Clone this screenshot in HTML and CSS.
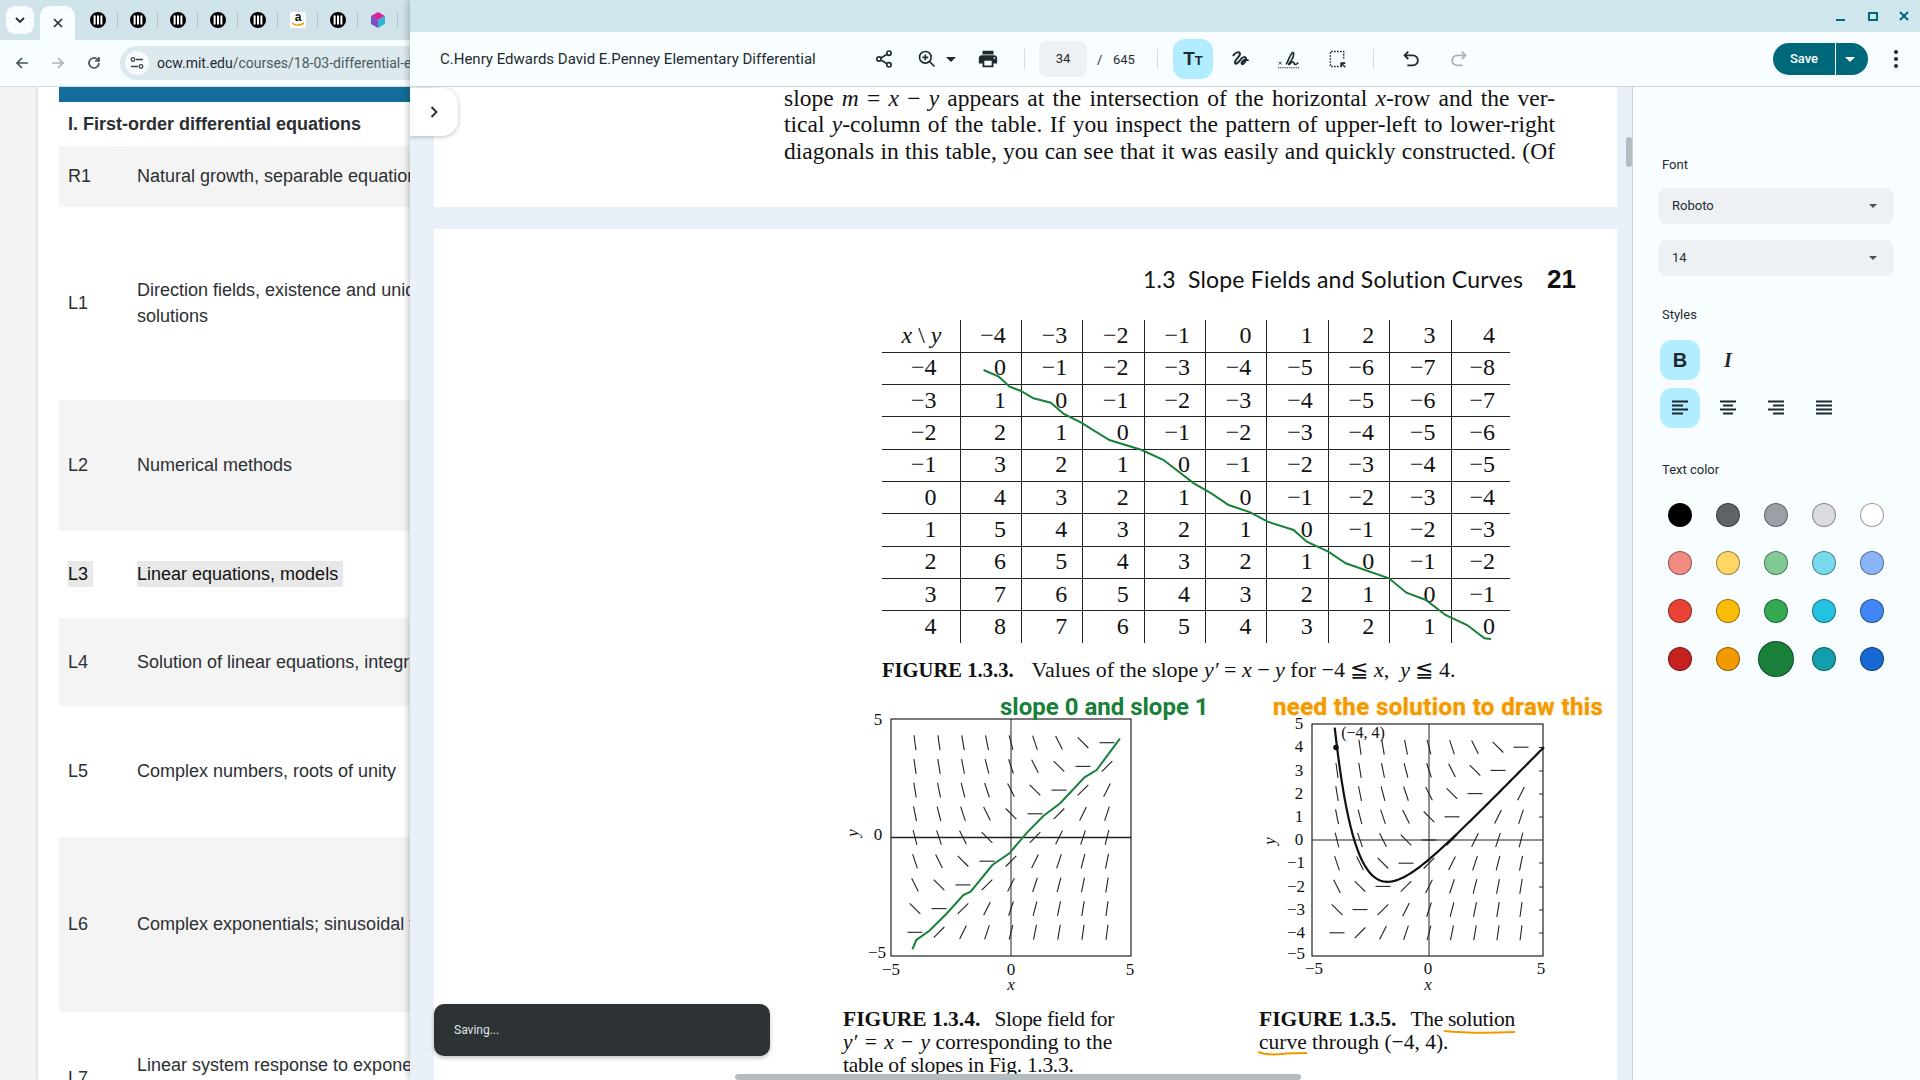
FILE: index.html
```html
<!DOCTYPE html>
<html lang="en">
<head>
    <meta charset="UTF-8">
    <meta name="viewport" content="width=device-width, initial-scale=1.0">
    <title>C.Henry Edwards David E.Penney Elementary Differential</title>
    <link rel="stylesheet" href="styles.css">
</head>
<body>

    <svg class="icon-defs" width="0" height="0">
        <symbol id="fav-ocw" viewBox="0 0 16 16">
            <circle cx="8" cy="8" r="8" fill="#000"/>
            <rect x="3.6" y="3.2" width="2" height="9.6" rx="1" fill="#fff"/>
            <rect x="7" y="3.2" width="2" height="9.6" rx="1" fill="#fff"/>
            <rect x="10.4" y="3.2" width="2" height="9.6" rx="1" fill="#fff"/>
        </symbol>
    </svg>

    <!-- browser window behind -->
    <div class="browser">
        <div class="tab-strip">
            <div class="tab-search">
                <svg width="12" height="12" viewBox="0 0 12 12"><path d="M2 4l4 4 4-4" fill="none" stroke="#1f2a30" stroke-width="1.8"/></svg>
            </div>
            <div class="tab-active">
                <svg width="12" height="12" viewBox="0 0 12 12"><path d="M2 2l8 8M10 2l-8 8" fill="none" stroke="#1f2a30" stroke-width="1.6"/></svg>
            </div>
            <div class="tab"><svg width="16" height="16"><use href="#fav-ocw"/></svg></div>
            <div class="tab"><svg width="16" height="16"><use href="#fav-ocw"/></svg></div>
            <div class="tab"><svg width="16" height="16"><use href="#fav-ocw"/></svg></div>
            <div class="tab"><svg width="16" height="16"><use href="#fav-ocw"/></svg></div>
            <div class="tab"><svg width="16" height="16"><use href="#fav-ocw"/></svg></div>
            <div class="tab"><div class="fav-amazon"><span>a</span><svg width="14" height="5" viewBox="0 0 14 5"><path d="M1 1c3 3 8 3 12 0" fill="none" stroke="#f29900" stroke-width="1.6"/></svg></div></div>
            <div class="tab"><svg width="16" height="16"><use href="#fav-ocw"/></svg></div>
            <div class="tab">
                <svg width="16" height="16" viewBox="0 0 16 16">
                    <polygon points="8,0 15,4 8,8 1,4" fill="#d6249f"/>
                    <polygon points="1,4 8,8 8,16 1,12" fill="#7a4fc0"/>
                    <polygon points="15,4 8,8 8,16 15,12" fill="#2fb4d6"/>
                </svg>
            </div>
        </div>

        <div class="nav-bar">
            <svg class="nav-icon" width="16" height="16" viewBox="0 0 16 16"><path d="M14 8H3M8 3L3 8l5 5" fill="none" stroke="#46545b" stroke-width="1.7"/></svg>
            <svg class="nav-icon" width="16" height="16" viewBox="0 0 16 16"><path d="M2 8h11M8 3l5 5-5 5" fill="none" stroke="#a9b2b6" stroke-width="1.7"/></svg>
            <svg class="nav-icon" width="16" height="16" viewBox="0 0 16 16"><path d="M13 8a5 5 0 1 1-1.5-3.6L13 6M13 2v4H9" fill="none" stroke="#46545b" stroke-width="1.7"/></svg>
            <div class="omnibox">
                <div class="site-info">
                    <svg width="14" height="14" viewBox="0 0 14 14"><path d="M6 3.5h7M1 10.5h7" stroke="#37444b" stroke-width="1.5"/><circle cx="3" cy="3.5" r="1.8" fill="none" stroke="#37444b" stroke-width="1.3"/><circle cx="11" cy="10.5" r="1.8" fill="none" stroke="#37444b" stroke-width="1.3"/></svg>
                </div>
                <span class="url"><b>ocw.mit.edu</b>/courses/18-03-differential-equations-spring-2010</span>
            </div>
        </div>

        <div class="web-page">
            <div class="web-card">
                <div class="unit-bar"></div>
                <h2 class="unit-title">I. First-order differential equations</h2>
                <div class="lessons">
                    <div class="lesson lesson-odd"><span class="lesson-code">R1</span><span class="lesson-name">Natural growth, separable equations</span></div>
                    <div class="lesson"><span class="lesson-code">L1</span><span class="lesson-name">Direction fields, existence and uniqueness of<br>solutions</span></div>
                    <div class="lesson lesson-odd"><span class="lesson-code">L2</span><span class="lesson-name">Numerical methods</span></div>
                    <div class="lesson"><span class="lesson-code"><mark>L3</mark></span><span class="lesson-name"><mark>Linear equations, models</mark></span></div>
                    <div class="lesson lesson-odd"><span class="lesson-code">L4</span><span class="lesson-name">Solution of linear equations, integrating factors</span></div>
                    <div class="lesson"><span class="lesson-code">L5</span><span class="lesson-name">Complex numbers, roots of unity</span></div>
                    <div class="lesson lesson-odd"><span class="lesson-code">L6</span><span class="lesson-name">Complex exponentials; sinusoidal functions</span></div>
                    <div class="lesson"><span class="lesson-code">L7</span><span class="lesson-name">Linear system response to exponential and<br>sinusoidal input</span></div>
                </div>
            </div>
        </div>
    </div>

    <!-- pdf editor window -->
    <div class="editor">
        <div class="title-bar">
            <span class="win-min"></span>
            <span class="win-max"></span>
            <svg class="win-close" width="10" height="10" viewBox="0 0 10 10"><path d="M1 1l8 8M9 1l-8 8" stroke="#00687b" stroke-width="2"/></svg>
        </div>

        <div class="tool-bar">
            <div class="doc-title">C.Henry Edwards David E.Penney Elementary Differential</div>
            <button class="icon-btn">
                <svg width="20" height="20" viewBox="0 0 24 24" fill="none" stroke="#1f2a30" stroke-width="2"><circle cx="18" cy="5" r="2.6"/><circle cx="6" cy="12" r="2.6"/><circle cx="18" cy="19" r="2.6"/><path d="M8.3 10.7l7.4-4.4M8.3 13.3l7.4 4.4"/></svg>
            </button>
            <button class="icon-btn zoom-btn">
                <svg width="20" height="20" viewBox="0 0 24 24" fill="none" stroke="#1f2a30" stroke-width="2"><circle cx="10" cy="10" r="7"/><path d="M15 15l6 6M10 6.5v7M6.5 10h7"/></svg>
                <span class="caret"></span>
            </button>
            <button class="icon-btn">
                <svg width="22" height="22" viewBox="0 0 24 24" fill="#1f2a30"><path d="M19 8H5c-1.66 0-3 1.34-3 3v6h4v4h12v-4h4v-6c0-1.66-1.34-3-3-3zm-3 11H8v-5h8v5zm3-7c-.55 0-1-.45-1-1s.45-1 1-1 1 .45 1 1-.45 1-1 1zm-1-9H6v4h12V3z"/></svg>
            </button>
            <span class="tb-sep sep-first"></span>
            <div class="page-box">34</div>
            <span class="page-slash">/</span>
            <span class="page-count">645</span>
            <span class="tb-sep"></span>
            <div class="tools">
                <button class="tool tool-on text-tool"><b>T</b><b class="text-tool-small">T</b></button>
                <button class="tool">
                    <svg width="24" height="24" viewBox="0 0 24 24" fill="none" stroke="#1f2a30" stroke-width="2"><path d="M4 9c2-4 7-5 7-2 0 3-6 6-5 9 .6 2 4-1 6-4 1.5-2 5-3 5 0 0 2-3 6-4 5-1-1 1-5 5-4 1 .3 1 1 1 1"/></svg>
                </button>
                <button class="tool">
                    <svg width="22" height="22" viewBox="0 0 24 24" fill="none" stroke="#1f2a30"><path d="M1 15l3 3M4 15l-3 3" stroke-width="1"/><path d="M9 18c2-4 5-12 7-13 2-1 1 5-1 8s-4 5-3 5c2 0 2-3 4-3s1 3 3 3 2-1 3-2" stroke-width="1.8"/><path d="M0 21.5h24" stroke-width="1.2" stroke-dasharray="1.4 1"/></svg>
                </button>
                <button class="tool">
                    <svg width="20" height="20" viewBox="0 0 24 24" fill="none" stroke="#1f2a30"><path d="M14 21H4V3h16v10" stroke-width="1.8" stroke-dasharray="2 1.6"/><path d="M16 16h6v2h-4v4h-2z" fill="#1f2a30" stroke="none"/><path d="M18 18l4 4" stroke-width="1.8"/></svg>
                </button>
                <span class="tb-sep sep-tools"></span>
                <button class="tool">
                    <svg width="22" height="22" viewBox="0 0 24 24" fill="none" stroke="#1f2a30" stroke-width="2"><path d="M9 4L5 8l4 4"/><path d="M5 8h9a5.5 5.5 0 0 1 0 11H8"/></svg>
                </button>
                <button class="tool">
                    <svg width="22" height="22" viewBox="0 0 24 24" fill="none" stroke="#a9b2b6" stroke-width="2"><path d="M15 4l4 4-4 4"/><path d="M19 8h-9a5.5 5.5 0 0 0 0 11h6"/></svg>
                </button>
            </div>
            <div class="save-group">
                <button class="save-btn">Save</button>
                <button class="save-more"><span class="caret caret-white"></span></button>
            </div>
            <button class="more-btn"><i></i><i></i><i></i></button>
        </div>

        <div class="work-area">
            <div class="viewer">
                <div class="pdf-page page-top">
                    <p class="body-text"><span>slope <i>m</i> = <i>x</i> − <i>y</i> appears at the intersection of the horizontal <i>x</i>-row and the ver-</span><span>tical <i>y</i>-column of the table. If you inspect the pattern of upper-left to lower-right</span><span>diagonals in this table, you can see that it was easily and quickly constructed. (Of</span></p>
                </div>

                <div class="pdf-page page-main">
                    <div class="running-head">
                        <span class="head-title">1.3&nbsp; Slope Fields and Solution Curves</span>
                        <span class="head-num">21</span>
                    </div>

                    <table class="slope-table">
                        <thead>
                            <tr><th><i>x</i> \ <i>y</i></th><th>−4</th><th>−3</th><th>−2</th><th>−1</th><th>0</th><th>1</th><th>2</th><th>3</th><th>4</th></tr>
                        </thead>
                        <tbody>
                            <tr><th>−4</th><td>0</td><td>−1</td><td>−2</td><td>−3</td><td>−4</td><td>−5</td><td>−6</td><td>−7</td><td>−8</td></tr>
                            <tr><th>−3</th><td>1</td><td>0</td><td>−1</td><td>−2</td><td>−3</td><td>−4</td><td>−5</td><td>−6</td><td>−7</td></tr>
                            <tr><th>−2</th><td>2</td><td>1</td><td>0</td><td>−1</td><td>−2</td><td>−3</td><td>−4</td><td>−5</td><td>−6</td></tr>
                            <tr><th>−1</th><td>3</td><td>2</td><td>1</td><td>0</td><td>−1</td><td>−2</td><td>−3</td><td>−4</td><td>−5</td></tr>
                            <tr><th>0</th><td>4</td><td>3</td><td>2</td><td>1</td><td>0</td><td>−1</td><td>−2</td><td>−3</td><td>−4</td></tr>
                            <tr><th>1</th><td>5</td><td>4</td><td>3</td><td>2</td><td>1</td><td>0</td><td>−1</td><td>−2</td><td>−3</td></tr>
                            <tr><th>2</th><td>6</td><td>5</td><td>4</td><td>3</td><td>2</td><td>1</td><td>0</td><td>−1</td><td>−2</td></tr>
                            <tr><th>3</th><td>7</td><td>6</td><td>5</td><td>4</td><td>3</td><td>2</td><td>1</td><td>0</td><td>−1</td></tr>
                            <tr><th>4</th><td>8</td><td>7</td><td>6</td><td>5</td><td>4</td><td>3</td><td>2</td><td>1</td><td>0</td></tr>
                        </tbody>
                    </table>

                    <p class="table-caption"><b>FIGURE 1.3.3.</b><span class="cap-gap"></span>Values of the slope <i>y′</i> = <i>x</i> − <i>y</i> for −4 ≦ <i>x</i>,&nbsp; <i>y</i> ≦ 4.</p>

                    <div class="figures">
                        <figure class="figure">
                            <svg class="graph" id="graph-left" width="320" height="290" viewBox="843 705 320 290">
                                <rect x="891" y="719" width="240" height="237" class="frame"/>
                                <path d="M1011 719v237" class="axis"/>
                                <path d="M891 837.5h240" class="axis axis-heavy"/>
                                <text x="878" y="725" class="tick">5</text>
                                <text x="878" y="840" class="tick">0</text>
                                <text x="877" y="958" class="tick">−5</text>
                                <text x="891" y="975" class="tick">−5</text>
                                <text x="1011" y="975" class="tick">0</text>
                                <text x="1130" y="975" class="tick">5</text>
                                <text x="1011" y="990" class="tick tick-var">x</text>
                                <text x="858" y="833" class="tick tick-var" transform="rotate(-90 858 833)">y</text>
                            </svg>
                            <figcaption class="fig-caption"><b>FIGURE 1.3.4.</b><span class="cap-gap-sm"></span><span class="cap-tight">Slope field for</span><br><span class="cap-eq"><i>y′</i> = <i>x</i> − <i>y</i></span> corresponding to the<br><span class="cap-tight">table of slopes in Fig. 1.3.3.</span></figcaption>
                        </figure>
                        <figure class="figure">
                            <svg class="graph" id="graph-right" width="320" height="290" viewBox="1259 705 320 290">
                                <rect x="1312" y="724" width="231" height="232" class="frame"/>
                                <path d="M1429 724v232M1312 840h231" class="axis"/>
                                <path d="M1539 747.5h4M1539 771h4M1539 794h4M1539 817h4M1539 863h4M1539 887h4M1539 910h4M1539 933h4" class="axis"/>
                                <text x="1299" y="729" class="tick">5</text>
                                <text x="1299" y="752" class="tick">4</text>
                                <text x="1299" y="776" class="tick">3</text>
                                <text x="1299" y="799" class="tick">2</text>
                                <text x="1299" y="822" class="tick">1</text>
                                <text x="1299" y="845" class="tick">0</text>
                                <text x="1296" y="868" class="tick">−1</text>
                                <text x="1296" y="892" class="tick">−2</text>
                                <text x="1296" y="915" class="tick">−3</text>
                                <text x="1296" y="938" class="tick">−4</text>
                                <text x="1296" y="959" class="tick">−5</text>
                                <text x="1314" y="974" class="tick">−5</text>
                                <text x="1428" y="974" class="tick">0</text>
                                <text x="1541" y="974" class="tick">5</text>
                                <text x="1428" y="990" class="tick tick-var">x</text>
                                <text x="1275" y="841" class="tick tick-var" transform="rotate(-90 1275 841)">y</text>
                                <text x="1363" y="738" class="tick tick-small">(−4, 4)</text>
                                <circle cx="1336" cy="747.5" r="2.8" fill="#111"/>
                            </svg>
                            <figcaption class="fig-caption"><b>FIGURE 1.3.5.</b><span class="cap-gap-sm"></span><span class="cap-tight">The solution</span><br>curve through (−4, 4).</figcaption>
                        </figure>
                    </div>

                    <!-- user annotations on top of the page -->
                    <span class="note note-green">slope 0 and slope 1</span>
                    <span class="note note-orange">need the solution to draw this</span>
                    <svg class="ink-layer" width="1183" height="851" viewBox="434 229 1183 851">
                        <path class="ink-green" d="M983.6 370L998.8 376.7 1009.6 386.7 1020.4 390.7 1033.5 398.3 1050.8 402.7 1063.8 414 1081.2 422.7 1109.3 440 1141.9 450 1163.6 460 1193.9 483.3 1211.3 493.3 1228.6 505 1250.3 512.3 1267.6 521.7 1293.6 530 1306.7 541.7 1328.3 551.7 1345.7 563.3 1389 578.3 1406.4 592.7 1425.9 600 1445.4 615 1467.1 625 1484.5 638.3 1491 639"/>
                        <path class="ink-green" d="M912.4 949.3L916.3 940 929.4 930.7 946.3 914 963.3 895 970.6 891.7 992.4 865 1009.4 853.3 1026.3 833.3 1043.3 816 1060.2 803.3 1084.5 777.3 1096.6 770 1119.9 738.7"/>
                        <path class="ink-orange" d="M1444 1031c20 2 50 2 71 1"/>
                        <path class="ink-orange" d="M1258 1052c8 3 14 3 24 2s16-1 25-1"/>
                    </svg>
                </div>

                <button class="panel-toggle">
                    <svg width="14" height="14" viewBox="0 0 14 14"><path d="M4.5 2l5 5-5 5" fill="none" stroke="#1f2a30" stroke-width="1.8"/></svg>
                </button>
                <div class="toast">Saving...</div>
                <div class="thumb-v"></div>
                <div class="thumb-h"></div>
            </div>

            <aside class="side-panel">
                <div class="panel-label label-font">Font</div>
                <div class="select">Roboto<span class="caret caret-grey"></span></div>
                <div class="select">14<span class="caret caret-grey"></span></div>

                <div class="panel-label label-styles">Styles</div>
                <div class="style-row">
                    <button class="tool tool-on style-b">B</button>
                    <button class="tool style-i">I</button>
                </div>
                <div class="style-row">
                    <button class="tool tool-on"><svg width="18" height="16" viewBox="0 0 18 16"><path d="M1 1.5h16M1 5.5h11M1 9.5h16M1 13.5h11" stroke="#1f2a30" stroke-width="2"/></svg></button>
                    <button class="tool"><svg width="18" height="16" viewBox="0 0 18 16"><path d="M1 1.5h16M4 5.5h10M1 9.5h16M4 13.5h10" stroke="#1f2a30" stroke-width="2"/></svg></button>
                    <button class="tool"><svg width="18" height="16" viewBox="0 0 18 16"><path d="M1 1.5h16M6 5.5h11M1 9.5h16M6 13.5h11" stroke="#1f2a30" stroke-width="2"/></svg></button>
                    <button class="tool"><svg width="18" height="16" viewBox="0 0 18 16"><path d="M1 1.5h16M1 5.5h16M1 9.5h16M1 13.5h16" stroke="#1f2a30" stroke-width="2"/></svg></button>
                </div>

                <div class="panel-label label-color">Text color</div>
                <div class="swatches">
                    <span class="swatch c-black"></span><span class="swatch c-grey1"></span><span class="swatch c-grey2"></span><span class="swatch c-grey3"></span><span class="swatch c-white"></span>
                    <span class="swatch c-red1"></span><span class="swatch c-yellow1"></span><span class="swatch c-green1"></span><span class="swatch c-cyan1"></span><span class="swatch c-blue1"></span>
                    <span class="swatch c-red2"></span><span class="swatch c-yellow2"></span><span class="swatch c-green2"></span><span class="swatch c-cyan2"></span><span class="swatch c-blue2"></span>
                    <span class="swatch c-red3"></span><span class="swatch c-yellow3"></span><span class="swatch c-green3 swatch-on"></span><span class="swatch c-cyan3"></span><span class="swatch c-blue3"></span>
                </div>
            </aside>
        </div>
    </div>

    <script>
        const svgNS = 'http://www.w3.org/2000/svg';

        // slope field for y' = x - y
        function drawField(svg, cx, cy, ux, uy, halfLen) {
            for (let x = -4; x <= 4; x++) {
                for (let y = -4; y <= 4; y++) {
                    const m = x - y;
                    const n = Math.sqrt(1 + m * m);
                    const line = document.createElementNS(svgNS, 'line');
                    line.setAttribute('x1', cx + x * ux - halfLen / n);
                    line.setAttribute('y1', cy - y * uy + halfLen * m / n);
                    line.setAttribute('x2', cx + x * ux + halfLen / n);
                    line.setAttribute('y2', cy - y * uy - halfLen * m / n);
                    line.setAttribute('class', 'seg');
                    svg.appendChild(line);
                }
            }
        }

        drawField(document.getElementById('graph-left'), 1011, 837.5, 24, 23.7, 7.5);
        drawField(document.getElementById('graph-right'), 1429, 840, 23, 23.2, 7.5);

        // solution curve through (-4, 4)
        const points = [];
        for (let x = -4.2; x <= 5; x += 0.1) {
            const y = x - 1 + 9 * Math.exp(-x - 4);
            if (y <= 5) {
                points.push((1429 + x * 23) + ',' + (840 - y * 23.2));
            }
        }
        const curve = document.createElementNS(svgNS, 'polyline');
        curve.setAttribute('points', points.join(' '));
        curve.setAttribute('class', 'solution');
        document.getElementById('graph-right').appendChild(curve);
    </script>
</body>
</html>
```

FILE: styles.css
```css
* {
    box-sizing: border-box;
}

body {
    margin: 0;
    width: 1920px;
    height: 1080px;
    overflow: hidden;
    display: flex;
    font-family: Roboto, sans-serif;
    background: #f8fdff;
    color: #1f2a30;
}

button {
    border: none;
    background: none;
    padding: 0;
    font-family: inherit;
    color: inherit;
}

.icon-defs {
    position: absolute;
}

/* browser behind */
.browser {
    width: 410px;
    flex: none;
    overflow: hidden;
    display: flex;
    flex-direction: column;
}

.tab-strip {
    height: 40px;
    flex: none;
    background: #cfe3e9;
    display: flex;
    align-items: flex-start;
    padding: 6px 0 0 6px;
}

.tab-search {
    width: 28px;
    height: 28px;
    border-radius: 9px;
    background: #f8fcfe;
    display: flex;
    align-items: center;
    justify-content: center;
    margin-right: 6px;
}

.tab-active {
    width: 35px;
    height: 34px;
    border-radius: 10px 10px 0 0;
    background: #f8fdff;
    display: flex;
    align-items: center;
    justify-content: center;
}

.tab {
    width: 40px;
    height: 28px;
    flex: none;
    display: flex;
    align-items: center;
    justify-content: center;
    position: relative;
    left: 3px;
}

.tab::after {
    content: "";
    position: absolute;
    right: 0;
    top: 6px;
    height: 16px;
    width: 1px;
    background: #b9c3c6;
}

.fav-amazon {
    width: 16px;
    height: 16px;
    background: #fff;
    border-radius: 2px;
    display: flex;
    flex-direction: column;
    align-items: center;
    font: bold 12px/10px "Liberation Sans", sans-serif;
    color: #111;
}

.fav-amazon svg {
    display: block;
}

.nav-bar {
    height: 47px;
    flex: none;
    background: #f8fdff;
    border-bottom: 1px solid #d5dcdf;
    display: flex;
    align-items: center;
    padding-left: 14px;
    gap: 20px;
}

.nav-icon {
    flex: none;
}

.omnibox {
    width: 400px;
    height: 34px;
    flex: none;
    margin-left: -2px;
    border-radius: 17px;
    background: #dce9ee;
    display: flex;
    align-items: center;
    padding-left: 5px;
}

.site-info {
    width: 24px;
    height: 24px;
    flex: none;
    border-radius: 50%;
    background: #f8fcfe;
    display: flex;
    align-items: center;
    justify-content: center;
    margin-right: 8px;
}

.url {
    font-size: 14px;
    color: #4c5a61;
    white-space: nowrap;
}

.url b {
    font-weight: 400;
    color: #1f2a30;
}

.web-page {
    flex: 1;
    background: #f3f3f3;
    padding-left: 38px;
    overflow: hidden;
}

.web-card {
    background: #fff;
    height: 100%;
    padding-left: 21px;
    box-shadow: -1px 0 3px rgba(0, 0, 0, 0.12);
    font-family: "Liberation Sans", Arial, sans-serif;
    color: #2b2f33;
}

.unit-bar {
    height: 15px;
    background: #126e99;
}

.unit-title {
    margin: 0;
    height: 44px;
    padding-left: 9px;
    font-size: 18px;
    line-height: 44px;
    font-weight: bold;
}

.lessons {
    display: grid;
    grid-template-rows: 61px 193px 131px 87px 88px 131px 175px 132px;
}

.lesson {
    display: flex;
    align-items: center;
    padding: 0 0 1px 9px;
    font-size: 18px;
    line-height: 26px;
    white-space: nowrap;
}

.lesson-odd {
    background: #f4f4f4;
}

.lesson-code {
    width: 69px;
    flex: none;
}

.lesson mark {
    background: #e8e8e8;
    color: #111;
    padding-right: 5px;
    display: inline-block;
}

/* editor window */
.editor {
    flex: 1;
    min-width: 0;
    display: flex;
    flex-direction: column;
    position: relative;
    box-shadow: -2px 0 6px rgba(0, 0, 0, 0.22);
}

.title-bar {
    height: 32px;
    flex: none;
    background: #cfe6ed;
    position: relative;
}

.win-min {
    position: absolute;
    left: 1426px;
    top: 19px;
    width: 9px;
    height: 2px;
    background: #00687b;
}

.win-max {
    position: absolute;
    left: 1458px;
    top: 12px;
    width: 10px;
    height: 9px;
    border: 2px solid #00687b;
}

.win-close {
    position: absolute;
    left: 1489px;
    top: 11px;
}

.tool-bar {
    height: 55px;
    flex: none;
    background: #f8fdff;
    border-bottom: 1px solid #ccd4d7;
    display: flex;
    align-items: center;
    padding-left: 30px;
}

.doc-title {
    width: 428px;
    flex: none;
    font-size: 15px;
    color: #1f2a30;
    white-space: nowrap;
}

.icon-btn {
    width: 32px;
    height: 32px;
    flex: none;
    display: flex;
    align-items: center;
    justify-content: center;
}

.zoom-btn {
    width: 54px;
    margin: 0 7px 0 11px;
    padding-left: 6px;
    justify-content: flex-start;
    gap: 9px;
}

.caret {
    width: 0;
    height: 0;
    border-left: 5px solid transparent;
    border-right: 5px solid transparent;
    border-top: 5px solid #1f2a30;
}

.caret-white {
    border-top-color: #fff;
    display: block;
}

.caret-grey {
    border-left-width: 4px;
    border-right-width: 4px;
    border-top: 4px solid #46545b;
    margin: 2px 0 0 auto;
}

.tb-sep {
    width: 1px;
    height: 20px;
    flex: none;
    background: #d5dcdf;
    margin-left: 15px;
}

.sep-first {
    margin-left: 20px;
}

.sep-tools {
    margin: 0 9px 0 8px;
}

.page-box {
    width: 48px;
    height: 36px;
    flex: none;
    margin-left: 14px;
    border-radius: 8px;
    background: #edf1f3;
    font-size: 13px;
    line-height: 36px;
    text-align: center;
}

.page-slash {
    width: 4px;
    flex: none;
    margin-left: 10px;
    font-size: 13px;
}

.page-count {
    width: 29px;
    flex: none;
    margin-left: 12px;
    font-size: 13px;
}

.tools {
    display: flex;
    align-items: center;
    gap: 8px;
    margin-left: 15px;
}

.tool {
    width: 40px;
    height: 40px;
    flex: none;
    border-radius: 12px;
    display: flex;
    align-items: center;
    justify-content: center;
}

.tool-on {
    background: #b1edff;
}

.text-tool {
    font-family: "Liberation Sans", sans-serif;
    font-size: 19px;
    align-items: baseline;
    line-height: 40px;
}

.text-tool-small {
    font-size: 13px;
}

.save-group {
    display: flex;
    margin-left: auto;
    height: 32px;
}

.save-btn {
    width: 62px;
    background: #00687b;
    color: #fff;
    font-size: 13px;
    font-weight: 500;
    border-radius: 16px 0 0 16px;
    margin-right: 1px;
    padding-bottom: 2px;
}

.save-more {
    width: 32px;
    background: #00687b;
    border-radius: 0 16px 16px 0;
    display: flex;
    align-items: center;
    justify-content: center;
    padding-right: 4px;
}

.more-btn {
    width: 32px;
    height: 32px;
    margin: 0 8px 0 12px;
    display: flex;
    flex-direction: column;
    align-items: center;
    justify-content: center;
    gap: 3px;
}

.more-btn i {
    width: 4px;
    height: 4px;
    border-radius: 50%;
    background: #1f2a30;
}

.work-area {
    flex: 1;
    min-height: 0;
    display: flex;
}

.viewer {
    width: 1222px;
    flex: none;
    position: relative;
    overflow: hidden;
    background: #e9f0f8;
    padding-left: 24px;
}

.pdf-page {
    width: 1183px;
    background: #fff;
    color: #111;
    font-family: "Liberation Serif", "Times New Roman", serif;
}

.page-top {
    height: 120px;
    margin-bottom: 22px;
    padding-left: 350px;
    overflow: hidden;
}

.body-text {
    margin: -2px 0 0;
    width: 771px;
    font-size: 23.5px;
    line-height: 26.3px;
}

.body-text span {
    display: block;
    text-align: justify;
    text-align-last: justify;
    white-space: nowrap;
}

.page-main {
    height: 860px;
    position: relative;
    overflow: hidden;
}

.running-head {
    height: 91px;
    display: flex;
    justify-content: flex-end;
    align-items: baseline;
    gap: 24px;
    padding: 35px 41px 0 0;
}

.head-title {
    font-family: Lato, sans-serif;
    font-size: 23px;
    letter-spacing: 0.2px;
}

.head-num {
    font-family: "Liberation Sans", sans-serif;
    font-size: 26px;
    font-weight: bold;
}

.slope-table {
    margin-left: 448px;
    width: 628px;
    table-layout: fixed;
    border-collapse: collapse;
    font-size: 24px;
}

.slope-table th,
.slope-table td {
    height: 32.3px;
    padding: 0 15px 2px 0;
    font-weight: normal;
    text-align: right;
    border-left: 1px solid #222;
    border-top: 1.5px solid #222;
    line-height: 1;
}

.slope-table th:first-child {
    width: 78px;
    padding-right: 23px;
    border-left: none;
}

.slope-table thead th:last-child {
    width: 59px;
}

.slope-table thead th {
    border-top: none;
}

.slope-table thead th:first-child {
    padding-right: 18px;
}

.table-caption {
    margin: 15px 0 23px 448px;
    height: 24px;
    font-size: 22px;
    line-height: 24px;
    white-space: nowrap;
}

.table-caption b {
    font-size: 20.6px;
}

.cap-gap {
    display: inline-block;
    width: 18px;
}

.cap-gap-sm {
    display: inline-block;
    width: 14px;
}

.cap-tight {
    letter-spacing: -0.3px;
}

.cap-eq {
    word-spacing: 2px;
}

.figures {
    display: flex;
    margin-left: 409px;
}

.figure {
    margin: 0;
    width: 416px;
    flex: none;
}

.graph {
    display: block;
    overflow: visible;
}

.frame {
    fill: none;
    stroke: #222;
    stroke-width: 1.2;
}

.axis {
    fill: none;
    stroke: #222;
    stroke-width: 1;
}

.axis-heavy {
    stroke-width: 1.5;
}

.seg {
    stroke: #222;
    stroke-width: 1.1;
}

.solution {
    fill: none;
    stroke: #111;
    stroke-width: 2.2;
}

.tick {
    font-family: "Liberation Serif", serif;
    font-size: 17px;
    fill: #111;
    text-anchor: middle;
}

.tick-var {
    font-style: italic;
}

.tick-small {
    font-size: 16px;
}

.fig-caption {
    margin-top: 13px;
    font-size: 21.5px;
    line-height: 23px;
    white-space: nowrap;
}

.note {
    position: absolute;
    font-family: Roboto, sans-serif;
    font-weight: 700;
    font-size: 24px;
    line-height: 28px;
    white-space: nowrap;
}

.note-green {
    left: 566px;
    top: 464px;
    color: #188038;
}

.note-orange {
    left: 839px;
    top: 464px;
    color: #f29900;
    letter-spacing: 0.4px;
    text-shadow: 0 0 2px rgba(242, 153, 0, 0.6);
}

.ink-layer {
    position: absolute;
    left: 0;
    top: 0;
    pointer-events: none;
}

.ink-green {
    fill: none;
    stroke: #188038;
    stroke-width: 2;
}

.ink-orange {
    fill: none;
    stroke: #f29900;
    stroke-width: 2;
}

.panel-toggle {
    position: absolute;
    left: 0;
    top: 1px;
    width: 48px;
    height: 48px;
    background: #fff;
    border-radius: 0 16px 16px 0;
    box-shadow: 0 1px 4px rgba(0, 0, 0, 0.25);
    display: flex;
    align-items: center;
    justify-content: center;
}

.toast {
    position: absolute;
    left: 24px;
    bottom: 24px;
    width: 336px;
    height: 52px;
    border-radius: 10px;
    background: #2d3235;
    box-shadow: 0 2px 4px rgba(0, 0, 0, 0.25);
    color: #dfe3e5;
    font-size: 12px;
    line-height: 52px;
    padding-left: 20px;
}

.thumb-v {
    position: absolute;
    right: 0;
    top: 50px;
    width: 6px;
    height: 30px;
    border-radius: 3px;
    background: #b4bcbf;
}

.thumb-h {
    position: absolute;
    left: 325px;
    bottom: 0;
    width: 566px;
    height: 6px;
    border-radius: 3px;
    background: #b4bcbf;
}

/* right panel */
.side-panel {
    flex: 1;
    background: #f8fdff;
    border-left: 1px solid #c8d0d4;
    padding: 70px 25px 0;
}

.panel-label {
    height: 16px;
    padding-left: 4px;
    font-size: 13px;
    line-height: 16px;
}

.label-font {
    margin-bottom: 15px;
}

.label-styles {
    margin: 31px 0 17px;
}

.label-color {
    margin: 34px 0 13px;
}

.select {
    width: 236px;
    height: 36px;
    border-radius: 8px;
    background: #edf1f3;
    display: flex;
    align-items: center;
    padding: 0 17px 2px 14px;
    font-size: 13px;
    margin-bottom: 16px;
}

.select:last-of-type {
    margin-bottom: 0;
}

.style-row {
    display: flex;
    gap: 8px;
    margin: 0 0 8px 2px;
}

.style-b {
    font-family: "Liberation Sans", sans-serif;
    font-size: 20px;
    font-weight: bold;
}

.style-i {
    font-family: "Liberation Serif", serif;
    font-size: 20px;
    font-weight: bold;
    font-style: italic;
}

.swatches {
    display: grid;
    grid-template-columns: repeat(5, 48px);
    grid-auto-rows: 48px;
    place-items: center;
    margin-left: -2px;
}

.swatch {
    width: 24px;
    height: 24px;
    border-radius: 50%;
    border: 1px solid rgba(0, 0, 0, 0.4);
}

.swatch-on {
    width: 36px;
    height: 36px;
}

.c-black { background: #000; }
.c-grey1 { background: #5f6368; }
.c-grey2 { background: #9aa0a6; }
.c-grey3 { background: #dadce0; }
.c-white { background: #fff; }
.c-red1 { background: #f28b82; }
.c-yellow1 { background: #fdd663; }
.c-green1 { background: #81c995; }
.c-cyan1 { background: #78d9ec; }
.c-blue1 { background: #8ab4f8; }
.c-red2 { background: #ea4335; }
.c-yellow2 { background: #fbbc04; }
.c-green2 { background: #34a853; }
.c-cyan2 { background: #24c1e0; }
.c-blue2 { background: #4285f4; }
.c-red3 { background: #c5221f; }
.c-yellow3 { background: #f29900; }
.c-green3 { background: #188038; }
.c-cyan3 { background: #129eaf; }
.c-blue3 { background: #1967d2; }
```
